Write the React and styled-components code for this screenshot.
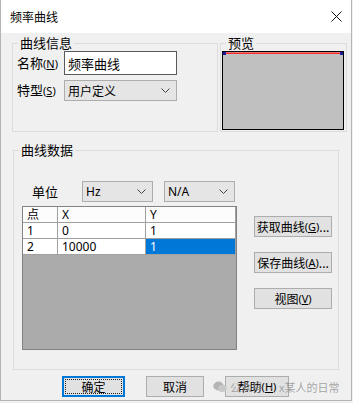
import React from "react";
import styled, { createGlobalStyle } from "styled-components";

const GlobalStyle = createGlobalStyle`
  html, body {
    margin: 0;
    padding: 0;
    background: #f0f0f0;
  }
  body {
    font-family: "Noto Sans", "Noto Sans CJK SC", sans-serif;
    font-size: 12px;
    color: #000;
  }
`;

const rows = [
  { id: "1", x: "0", y: "1" },
  { id: "2", x: "10000", y: "1", selected: true },
];

const Accel = ({ k }) => (
  <Paren>
    (<u>{k}</u>)
  </Paren>
);

const Chevron = () => (
  <svg width="9" height="5" viewBox="0 0 9 5">
    <path d="M0.5 0.5 L4.5 4.5 L8.5 0.5" fill="none" stroke="#444" strokeWidth="1" />
  </svg>
);

const Combo = ({ value, width }) => (
  <ComboBox $w={width}>
    <span>{value}</span>
    <Chevron />
  </ComboBox>
);

export default function App() {
  return (
    <>
      <GlobalStyle />
      <Dialog>
        <TitleBar>
          <Title>频率曲线</Title>
          <svg width="11" height="11" viewBox="0 0 11 11">
            <path d="M0.5 0.5 L10.5 10.5 M10.5 0.5 L0.5 10.5" stroke="#111" strokeWidth="1" />
          </svg>
        </TitleBar>

        <Body>
          <TopRow>
            <Group $w={206} $h={97}>
              <Legend>曲线信息</Legend>
              <InfoGrid>
                <Label>
                  名称<Accel k="N" />
                </Label>
                <TextBox>频率曲线</TextBox>
                <Label>
                  特型<Accel k="S" />
                </Label>
                <Combo value="用户定义" width={113} />
              </InfoGrid>
            </Group>

            <Group $w={127} $h={97}>
              <Legend>预览</Legend>
              <Preview>
                <svg width="120" height="6" viewBox="0 0 120 6">
                  <line x1="0" y1="1.2" x2="120" y2="1.2" stroke="#ff2a2a" strokeWidth="1.6" />
                  <rect x="0" y="0" width="3" height="3" fill="#1a1aa0" />
                  <rect x="117" y="0" width="3" height="3" fill="#1a1aa0" />
                </svg>
              </Preview>
            </Group>
          </TopRow>

          <DataGroup>
            <Legend>曲线数据</Legend>
            <UnitRow>
              <Label>单位</Label>
              <Combo value="Hz" width={71} />
              <Combo value="N/A" width={71} />
            </UnitRow>

            <DataRow>
              <Table>
                <HeadCell>点</HeadCell>
                <HeadCell>X</HeadCell>
                <HeadCell>Y</HeadCell>
                {rows.map((r) => (
                  <React.Fragment key={r.id}>
                    <Cell>{r.id}</Cell>
                    <Cell>{r.x}</Cell>
                    <Cell $selected={r.selected}>{r.y}</Cell>
                  </React.Fragment>
                ))}
              </Table>

              <SideButtons>
                <Button $w={78}>
                  获取曲线<Accel k="G" />...
                </Button>
                <Button $w={78}>
                  保存曲线<Accel k="A" />...
                </Button>
                <Button $w={78}>
                  视图<Accel k="V" />
                </Button>
              </SideButtons>
            </DataRow>
          </DataGroup>

          <Footer>
            <Button $w={63} $default>
              <Focus>确定</Focus>
            </Button>
            <Button $w={58}>取消</Button>
            <Button $w={64}>
              帮助<Accel k="H" />
            </Button>
          </Footer>
        </Body>

        <Watermark>
          <svg width="14" height="12" viewBox="0 0 14 12">
            <ellipse cx="5.5" cy="5" rx="5.2" ry="4.4" fill="#b5b5b5" />
            <ellipse cx="9.5" cy="7.5" rx="4.3" ry="3.6" fill="#c8c8c8" />
          </svg>
          <WmText>公众号 · x某人的日常</WmText>
        </Watermark>
      </Dialog>
    </>
  );
}

const Dialog = styled.div`
  position: relative;
  box-sizing: border-box;
  width: 352px;
  height: 401px;
  border: 1px solid #b4b4b4;
  border-top: none;
  background: #f0f0f0;
`;

const TitleBar = styled.div`
  height: 33px;
  background: #fff;
  display: flex;
  align-items: center;
  justify-content: space-between;
  padding: 0 9px 0 9px;
`;

const Title = styled.div`
  font-family: "Noto Sans CJK SC", sans-serif;
  font-size: 12px;
  line-height: 16px;
`;

const Body = styled.div`
  padding: 2px 0 0 11px;
`;

const TopRow = styled.div`
  display: flex;
  gap: 2px;
`;

const Group = styled.fieldset`
  box-sizing: border-box;
  width: ${(p) => p.$w}px;
  height: ${(p) => p.$h}px;
  margin: 0;
  padding: 0;
  min-width: 0;
  border: 1px solid #dcdcdc;
`;

const Legend = styled.legend`
  margin-left: 5px;
  padding: 0 2px;
  font-family: "Noto Sans CJK SC", sans-serif;
  font-size: 13px;
  line-height: 16px;
`;

const InfoGrid = styled.div`
  display: grid;
  grid-template-columns: 47px 113px;
  grid-template-rows: 24px 21px;
  row-gap: 5px;
  padding-left: 4px;
  align-items: center;
`;

const Label = styled.div`
  font-family: "Noto Sans CJK SC", sans-serif;
  font-size: 13px;
  line-height: 16px;
  white-space: nowrap;
`;

const Paren = styled.span`
  font-family: "Noto Sans", sans-serif;
  font-size: 11px;
`;

const TextBox = styled.div`
  box-sizing: border-box;
  height: 24px;
  border: 1px solid #5a5a5a;
  background: #fff;
  padding: 0 3px;
  display: flex;
  align-items: center;
  font-family: "Noto Sans CJK SC", sans-serif;
  font-size: 13px;
`;

const ComboBox = styled.div`
  box-sizing: border-box;
  width: ${(p) => p.$w}px;
  height: 21px;
  border: 1px solid #adadad;
  background: #e5e5e5;
  display: flex;
  align-items: center;
  justify-content: space-between;
  padding: 0 6px 0 3px;
  font-family: "Noto Sans", "Noto Sans CJK SC", sans-serif;
  font-size: 12px;
`;

const Preview = styled.div`
  box-sizing: border-box;
  width: 122px;
  height: 79px;
  margin-left: 1px;
  border: 1px solid #000;
  background: #c0c0c0;
  line-height: 0;
`;

const DataGroup = styled(Group)`
  width: 326px;
  height: 228px;
  margin: 10px 0 0 1px;
  padding: 23px 0 0 0;
`;

const UnitRow = styled.div`
  display: flex;
  align-items: center;
  padding-left: 18px;
  height: 21px;

  & > ${Label} {
    width: 50px;
  }
  & > ${ComboBox} + ${ComboBox} {
    margin-left: 11px;
  }
`;

const DataRow = styled.div`
  display: flex;
  align-items: flex-start;
  margin: 4px 0 0 8px;
`;

const Table = styled.div`
  box-sizing: border-box;
  width: 215px;
  height: 144px;
  border: 1px solid #828282;
  background: #ababab;
  display: grid;
  grid-template-columns: 35px 88px 90px;
  grid-auto-rows: 16px;
  align-content: start;
`;

const Cell = styled.div`
  box-sizing: border-box;
  border-right: 1px solid #a0a0a0;
  border-bottom: 1px solid #a0a0a0;
  background: ${(p) => (p.$selected ? "#0078d7" : "#fff")};
  color: ${(p) => (p.$selected ? "#fff" : "#000")};
  padding-left: 4px;
  font-family: "Noto Sans", "Noto Sans CJK SC", sans-serif;
  font-size: 12px;
  line-height: 15px;
`;

const HeadCell = styled(Cell)`
  background: #fcfcfc;
  font-size: 12px;
`;

const SideButtons = styled.div`
  display: flex;
  flex-direction: column;
  gap: 15px;
  margin: 10px 0 0 17px;
`;

const Button = styled.div`
  box-sizing: border-box;
  width: ${(p) => p.$w}px;
  height: 21px;
  border: ${(p) => (p.$default ? "2px solid #0078d7" : "1px solid #adadad")};
  background: #e1e1e1;
  display: flex;
  align-items: center;
  justify-content: center;
  font-family: "Noto Sans CJK SC", sans-serif;
  font-size: 12px;
  line-height: 15px;
  white-space: nowrap;
`;

const Focus = styled.span`
  box-sizing: border-box;
  flex: 1;
  align-self: stretch;
  margin: 1px;
  border: 1px dotted #222;
  display: flex;
  align-items: center;
  justify-content: center;
`;

const Footer = styled.div`
  display: flex;
  gap: 21px;
  margin: 6px 0 0 50px;
`;

const Watermark = styled.div`
  position: absolute;
  left: 212px;
  top: 380px;
  display: flex;
  align-items: center;
  gap: 3px;
  pointer-events: none;
`;

const WmText = styled.span`
  font-family: "Noto Sans CJK SC", sans-serif;
  font-size: 11px;
  line-height: 14px;
  color: rgba(140, 140, 140, 0.75);
`;
